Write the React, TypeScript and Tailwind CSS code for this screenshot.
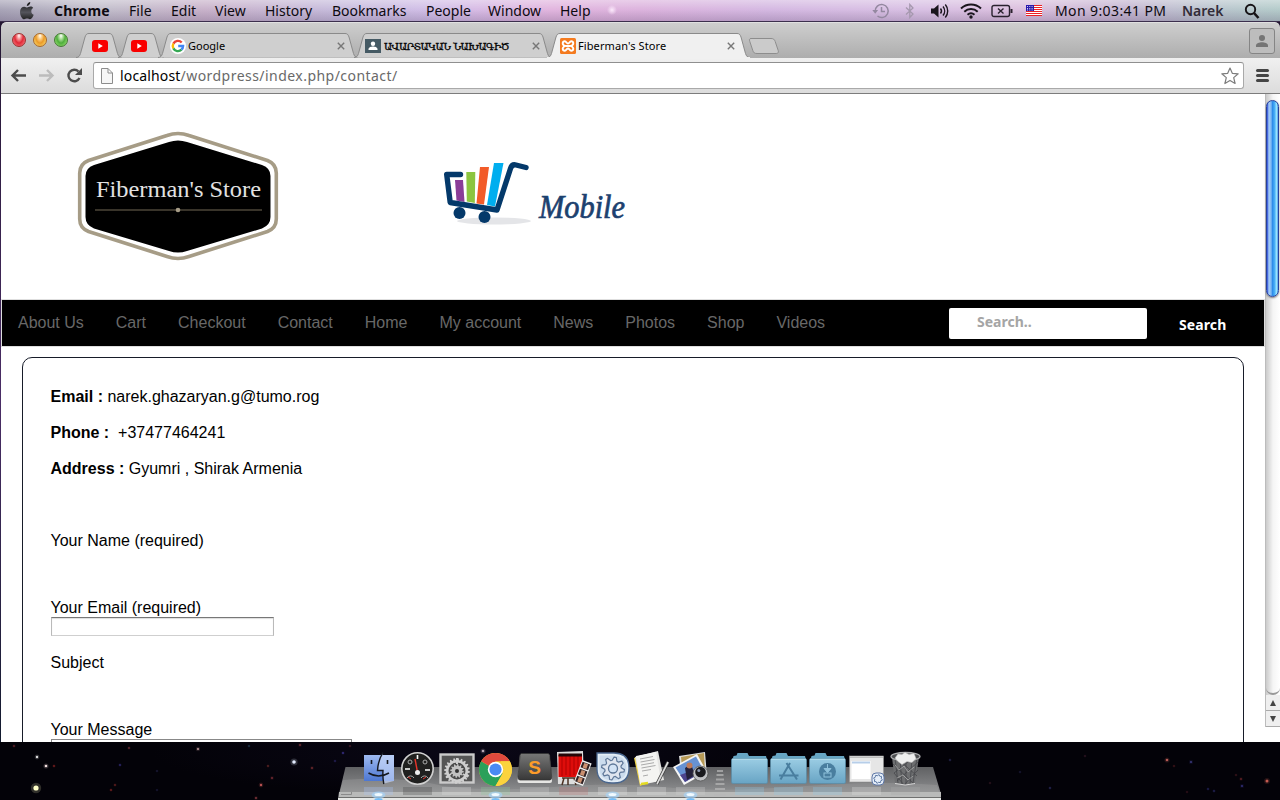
import React from "react";

const UI = "font-['Noto_Sans','Open_Sans',sans-serif]";

function AppleLogo() {
  return (
    <svg width="18" height="20" viewBox="0 0 18 20" className="block">
      <defs>
        <linearGradient id="apple" x1="0" y1="0" x2="0" y2="1">
          <stop offset="0" stopColor="#111" />
          <stop offset="0.6" stopColor="#55555c" />
          <stop offset="1" stopColor="#222" />
        </linearGradient>
      </defs>
      <path
        fill="url(#apple)"
        d="M12.3 1c.1 2-1.600 4-3.500 4C8.600 3.200 10.300 1.300 12.300 1zM15.200 7C14 7.700 13.300 8.700 13.300 10.200c0 1.700 1 2.900 2.400 3.500-.6 2-2.200 4.500-3.700 4.500-1.100 0-1.600-.7-2.900-.7s-1.900.7-2.900.7C4.300 18.200 2 14.500 2 10.900 2 7.600 4.100 5.700 6.300 5.700c1.200 0 2.100.8 2.900.8.700 0 1.800-.9 3.300-.9 1.100 0 2.100.5 2.700 1.400z"
      />
    </svg>
  );
}

function TimeMachine() {
  return (
    <svg width="18" height="16" viewBox="0 0 18 16" fill="none" stroke="#9488a0" strokeWidth="1.500">
      <path d="M3.200 8.500A6.500 6.500 0 1 1 5.500 13M9.500 4v4.500h3.500" />
      <path d="M.3 7h5.800L3.200 10.800z" fill="#9488a0" stroke="none" />
    </svg>
  );
}

function Bluetooth() {
  return (
    <svg width="10" height="16" viewBox="0 0 10 16" fill="none" stroke="#a598ae" strokeWidth="1.300">
      <path d="M1 4.500l7 6.500-3.200 3.500V1.500L8 5l-7 6.500" />
    </svg>
  );
}

function Volume() {
  return (
    <svg width="18" height="16" viewBox="0 0 18 16" fill="none" stroke="#1a151d" strokeWidth="1.400">
      <path d="M0 5.500h3L7.500 1.500v13L3 10.500H0z" fill="#1a151d" stroke="none" />
      <path d="M9.500 5.500a4 4 0 0 1 0 5M12 3.500a7 7 0 0 1 0 9M14.300 1.500a10 10 0 0 1 0 13" />
    </svg>
  );
}

function Wifi() {
  return (
    <svg width="22" height="16" viewBox="0 0 22 16" fill="none" stroke="#1a151d" strokeWidth="2">
      <path d="M1 5.500a14.500 14.500 0 0 1 20 0M4.300 8.700a10 10 0 0 1 13.400 0M7.500 11.700a5.500 5.500 0 0 1 7 0" />
      <circle cx="11" cy="14" r="1.700" fill="#1a151d" stroke="none" />
    </svg>
  );
}

function Battery() {
  return (
    <svg width="22" height="14" viewBox="0 0 22 14" fill="none" stroke="#2a222e" strokeWidth="1.400">
      <rect x="1" y="1.500" width="17.500" height="11" rx="2" />
      <path d="M20.500 5v4" strokeWidth="2" />
      <path d="M7 4.500l5.500 5M12.500 4.500L7 9.500" />
    </svg>
  );
}

function Flag() {
  return (
    <svg width="16" height="11" viewBox="0 0 16 11">
      <rect width="16" height="11" fill="#fff" />
      <path d="M0 .5h16M0 2.500h16M0 4.500h16M0 6.500h16M0 8.500h16M0 10.500h16" stroke="#ed2024" />
      <rect width="8" height="6" fill="#2a19ad" />
      <path d="M1 1.500h6M1 3.500h6M1 5h6" stroke="#fff" strokeWidth=".8" strokeDasharray="1 1.300" />
    </svg>
  );
}

function MenuBar() {
  const items: [string, string][] = [
    ["File", "w-[42px] tracking-[0.1px]"],
    ["Edit", "w-[44px]"],
    ["View", "w-[50px]"],
    ["History", "w-[67px]"],
    ["Bookmarks", "w-[94px]"],
    ["People", "w-[62px]"],
    ["Window", "w-[72px]"],
    ["Help", "w-[40px]"],
  ];
  return (
    <header
      className={`${UI} flex h-[22px] w-full shrink-0 items-center border-b border-[#3c2f4d] bg-[radial-gradient(circle_at_612px_10px,rgba(255,240,255,0.9)_0,rgba(255,240,255,0)_5px),linear-gradient(to_bottom,rgba(255,255,255,0.35),rgba(255,255,255,0)_45%,rgba(70,50,90,0.22)),linear-gradient(to_right,#a9a5b8_0%,#c3bfcc_8%,#c9b3cb_16%,#c7bcdc_26%,#d2bfe8_34%,#e2b6df_43%,#ddb4de_50%,#d5b9e2_60%,#d9c1e4_72%,#dcc0de_80%,#c5b7d2_88%,#bac6ce_95%,#b5cccb_100%)] text-[14px] text-[#0d0a10]`}
    >
      <div className="w-[54px] pl-[18px]">
        <AppleLogo />
      </div>
      <span className="w-[75px] whitespace-nowrap font-bold tracking-[0.150px]">Chrome</span>
      {items.map(([label, cls]) => (
        <span key={label} className={`${cls} whitespace-nowrap`}>
          {label}
        </span>
      ))}
      <div className="ml-auto flex items-center">
        <div className="w-[33px]"><TimeMachine /></div>
        <div className="w-[26px]"><Bluetooth /></div>
        <div className="w-[29px]"><Volume /></div>
        <div className="w-[31px]"><Wifi /></div>
        <div className="w-[35px]"><Battery /></div>
        <div className="w-[29px]"><Flag /></div>
        <span className="w-[127px] whitespace-nowrap tracking-[0.400px]">Mon 9:03:41 PM</span>
        <span className="w-[62px] whitespace-nowrap font-semibold text-[#332c38]">Narek</span>
        <svg width="36" height="16" viewBox="0 0 36 16" fill="none" stroke="#161316">
          <circle cx="6.500" cy="6.500" r="4.700" strokeWidth="1.900" />
          <path d="M10 10l4.500 5" strokeWidth="2.600" />
        </svg>
      </div>
    </header>
  );
}

function TabShape({ w, active }: { w: number; active?: boolean }) {
  const d = `M0 24.500C3 24.500 3.500 23 4.500 20.500L9 4C10 1.200 11 .5 13 .5H${w - 13}C${w - 11} .5 ${w - 10} 1.200 ${w - 9} 4L${w - 4.5} 20.500C${w - 3.5} 23 ${w - 3} 24.500 ${w} 24.500`;
  return (
    <svg width={w} height="26" className="absolute left-0 top-0">
      <path d={d} fill={active ? "#f0f0f0" : "#cfcfcf"} stroke="#8a8a8a" />
      {active && <rect y="24" width={w} height="2" fill="#f0f0f0" />}
    </svg>
  );
}

function Close() {
  return (
    <svg width="8" height="8" viewBox="0 0 8 8" className="shrink-0">
      <path d="M.8.8l6.400 6.400M7.200.8L.8 7.200" stroke="#777" strokeWidth="1.400" />
    </svg>
  );
}

function YouTube() {
  return (
    <svg width="16" height="12" viewBox="0 0 16 12">
      <rect width="16" height="12" rx="3" fill="#f90000" />
      <path d="M6.300 3.300v5.400L10.800 6z" fill="#fff" />
    </svg>
  );
}

function GoogleIcon() {
  return (
    <svg width="16" height="16" viewBox="0 0 16 16" className="shrink-0">
      <circle cx="8" cy="8" r="8" fill="#fff" />
      <g fill="none" strokeWidth="2.400">
        <path d="M3.400 5.600A5.100 5.100 0 0 1 11.700 4.500" stroke="#ea4335" />
        <path d="M3.400 10.400a5.100 5.100 0 0 1 0-4.800" stroke="#fbbc05" />
        <path d="M11.500 11.700a5.100 5.100 0 0 1-8.100-1.300" stroke="#34a853" />
        <path d="M8.200 8h4.900a5 5 0 0 1-1.700 3.700" stroke="#4285f4" />
      </g>
    </svg>
  );
}

function ClassroomIcon() {
  return (
    <svg width="16" height="14" viewBox="0 0 16 14" className="shrink-0">
      <rect width="16" height="14" fill="#455a64" />
      <circle cx="8" cy="4.700" r="2.200" fill="#fff" />
      <path d="M3.500 11V10c0-1.700 3-2.500 4.500-2.500s4.500.8 4.500 2.500v1z" fill="#fff" />
    </svg>
  );
}

function XamppIcon() {
  return (
    <svg width="16" height="16" viewBox="0 0 16 16" className="shrink-0">
      <rect width="16" height="16" rx="1.500" fill="#f47b20" />
      <path
        d="M5 8C1.500 6.500 2.500 3.300 4.800 3.300 6.500 3.300 6.500 5.500 8 5.500s1.500-2.200 3.200-2.200C13.500 3.300 14.500 6.500 11 8c3.500 1.500 2.500 4.700.2 4.700-1.700 0-1.700-2.200-3.200-2.200s-1.500 2.200-3.200 2.200C2.500 12.700 1.500 9.500 5 8zM5.500 8h5"
        fill="none"
        stroke="#fff"
        strokeWidth="1.900"
      />
    </svg>
  );
}

function TabStrip() {
  return (
    <div className={`${UI} flex h-[36px] shrink-0 items-start rounded-t-[5px] border-t border-[#e0e0e0] bg-gradient-to-b from-[#cecece] to-[#adadad] text-[11px] text-black`}>
      <div className="flex w-[75px] gap-[7px] pl-[11px] pt-[10px]">
        <i className="h-[14px] w-[14px] rounded-full border border-[#9c3030] bg-[radial-gradient(ellipse_at_50%_15%,#fff_0%,#f79a9a_22%,#e02a38_50%,#ff8c90_100%)]" />
        <i className="h-[14px] w-[14px] rounded-full border border-[#a8692a] bg-[radial-gradient(ellipse_at_50%_15%,#fff_0%,#fcd08a_22%,#eb9a28_50%,#ffee80_100%)]" />
        <i className="h-[14px] w-[14px] rounded-full border border-[#447a34] bg-[radial-gradient(ellipse_at_50%_15%,#fff_0%,#b2e0a0_22%,#4fae3c_50%,#aaf080_100%)]" />
      </div>
      <div className="relative mt-[10px] h-[26px] w-[46px]">
        <TabShape w={46} />
        <div className="relative pl-[16px] pt-[7px]"><YouTube /></div>
      </div>
      <div className="relative -ml-[4px] mt-[10px] h-[26px] w-[46px]">
        <TabShape w={46} />
        <div className="relative pl-[13px] pt-[7px]"><YouTube /></div>
      </div>
      <div className="relative -ml-[6px] mt-[10px] h-[26px] w-[200px]">
        <TabShape w={200} />
        <div className="relative flex h-[26px] items-center pl-[12px] pr-[13px]">
          <GoogleIcon />
          <span className="ml-[2px] flex-1">Google</span>
          <Close />
        </div>
      </div>
      <div className="relative -ml-[4px] mt-[10px] h-[26px] w-[198px]">
        <TabShape w={198} />
        <div className="relative flex h-[26px] items-center pl-[11px] pr-[12px]">
          <ClassroomIcon />
          <span className="ml-[3px] flex-1 whitespace-nowrap font-['DejaVu_Serif',serif] text-[10px] tracking-[-0.550px] [-webkit-text-stroke:0.300px_#000]">ԱՎԱՐՏԱԿԱՆ ՆԱԽԱԳԻԾ</span>
          <Close />
        </div>
      </div>
      <div className="relative z-10 -ml-[5px] mt-[10px] h-[26px] w-[203px]">
        <TabShape w={203} active />
        <div className="relative flex h-[26px] items-center pl-[13px] pr-[15px]">
          <XamppIcon />
          <span className="ml-[2px] flex-1 whitespace-nowrap tracking-[0.100px]">Fiberman's Store</span>
          <Close />
        </div>
      </div>
      <svg width="34" height="18" viewBox="0 0 34 18" className="-ml-[3px] mt-[14px]">
        <path d="M4 1.500h20c2.500 0 3.500 1 4.200 3l3 9c.6 2-.2 3-2 3H10c-2.500 0-3.500-.8-4.200-3l-3-9c-.6-2-.5-3 1.200-3z" fill="#cbcbcb" stroke="#8d8d8d" />
      </svg>
      <div className="ml-auto mr-[5px] mt-[5px] flex h-[26px] w-[26px] items-center justify-center rounded-[3px] border border-[#858585] bg-[#bdbdbd]">
        <svg width="14" height="14" viewBox="0 0 14 14" fill="#757575">
          <circle cx="7" cy="4" r="3" />
          <path d="M1 13v-1.500C1 9.500 4.500 8.300 7 8.300s6 1.200 6 3.200V13z" />
        </svg>
      </div>
    </div>
  );
}

function Toolbar() {
  return (
    <div className="flex h-[36px] shrink-0 items-center border-b border-[#7c7c7c] bg-gradient-to-b from-[#f0f0f0] to-[#dcdcdc]">
      <svg width="80" height="20" viewBox="0 0 80 20" className="ml-[9px] shrink-0" fill="none" strokeWidth="2.400">
        <path d="M16 9.500H3M8 4L2.500 9.500 8 15" stroke="#4c4c4c" />
        <path d="M29 9.500h13M37 4l5.500 5.500L37 15" stroke="#bcbcbc" />
        <path d="M68.500 5.500A5.800 5.800 0 1 0 69.500 12" stroke="#4c4c4c" />
        <path d="M72 2v7h-7z" fill="#4c4c4c" stroke="none" />
      </svg>
      <div className="ml-[3px] flex h-[27px] flex-1 items-center rounded-[3px] border border-[#a9a9a9] border-t-[#8f8f8f] bg-white pl-[7px] pr-[4px]">
        <svg width="12" height="16" viewBox="0 0 12 16" fill="#f6f6f6" stroke="#8c8c8c">
          <path d="M.5.5h6.500l4.500 4.500v10.500H.5zM7 .5v4.500h4.500" />
        </svg>
        <span className={`${UI} ml-[7px] flex-1 whitespace-nowrap text-[14px] tracking-[0.460px] text-[#696969]`}>
          <span className="tracking-[0.150px] text-black">localhost</span>/wordpress/index.php/contact/
        </span>
        <svg width="18" height="18" viewBox="0 0 18 18" fill="#fff" stroke="#7d7d7d" strokeWidth="1.200" strokeLinejoin="round">
          <path d="M9 1l2.300 5.300 5.900.5-4.500 3.800 1.400 5.900L9 13.400l-5.100 3.100 1.400-5.900L.8 6.800l5.900-.5z" />
        </svg>
      </div>
      <div className="ml-[12px] mr-[11px] flex w-[13px] flex-col gap-[2px]">
        <i className="h-[3px] rounded-full bg-[#454545]" />
        <i className="h-[3px] rounded-full bg-[#454545]" />
        <i className="h-[3px] rounded-full bg-[#454545]" />
      </div>
    </div>
  );
}

function StoreLogo() {
  return (
    <svg width="204" height="132" viewBox="0 0 204 132" strokeLinejoin="round">
      <path d="M12.500 29.500Q3.700 33 3.700 42v46Q3.700 97 12.500 100.500L91 125.500q11 4 22 0l78.500-25q8.800-3.500 8.800-12.500V42q0-9-8.800-12.500L113 4.500q-11-4-22 0z" fill="#fff" stroke="#a69c86" strokeWidth="3.600" />
      <path d="M18 34Q9.500 37 9.500 45v41Q9.500 94 18 97.500l75 22.500q9 3 18 0l75-22.500q8.500-3.500 8.500-11.500V45q0-8-8.500-11L111 11q-9-3-18 0z" fill="#000" />
      <text x="20" y="66" textLength="165" lengthAdjust="spacingAndGlyphs" fontFamily="'Liberation Serif', serif" fontSize="24" fill="#e2e2e2">Fiberman's Store</text>
      <path d="M19 79h167" stroke="#4d4638" strokeWidth="1.500" />
      <circle cx="102" cy="79" r="2.300" fill="#a69c86" />
    </svg>
  );
}

function MobileLogo() {
  return (
    <svg width="190" height="66" viewBox="0 0 190 66">
      <ellipse cx="53" cy="61" rx="37" ry="3.500" fill="#e4e5e8" />
      <path d="M14 20h8l1.500 22-8-1.500z" fill="#8a3d98" />
      <path d="M25.300 12h9l-.5 31-8-1.500z" fill="#8cc540" />
      <path d="M39 7h9l-5 37.500-7.500-1z" fill="#f25b29" />
      <path d="M53 3h9.500L54 46.500l-8-1.500z" fill="#00aeef" />
      <path
        d="M19.500 14.500H5.700L9.200 42.500 56 50 69.500 8.500q1.500-4.500 5.500-3.500l10 2.500"
        fill="none"
        stroke="#04396a"
        strokeWidth="5.400"
        strokeLinecap="round"
        strokeLinejoin="round"
      />
      <circle cx="18.500" cy="53" r="6" fill="#04396a" />
      <circle cx="43.500" cy="57" r="6" fill="#04396a" />
      <text x="98" y="58" textLength="86" lengthAdjust="spacingAndGlyphs" fontFamily="'Liberation Serif', serif" fontStyle="italic" fontSize="33" fill="#1c416f" stroke="#1c416f" strokeWidth=".7">Mobile</text>
    </svg>
  );
}

function SiteNav() {
  const links = ["About Us", "Cart", "Checkout", "Contact", "Home", "My account", "News", "Photos", "Shop", "Videos"];
  return (
    <nav className="mr-[1px] flex h-[46px] items-start bg-black shadow-[0_0_0_1px_#dedede]">
      <div className="flex gap-8 pl-4 pt-[11px] text-[16px] leading-6 text-[#686868]">
        {links.map((l) => (
          <a key={l} className="whitespace-nowrap">{l}</a>
        ))}
      </div>
      <div className={`${UI} ml-auto flex text-[14px] font-bold`}>
        <div className="mt-[8px] h-[31px] w-[198px] rounded-[2px] bg-white pl-[28px] leading-[28px] text-[#a5a5a5]">Search..</div>
        <button className="ml-[32px] mr-[37px] mt-[11px] w-[48px] whitespace-nowrap text-left leading-[28px] tracking-[0.100px] text-white">Search</button>
      </div>
    </nav>
  );
}

function ContactCard() {
  return (
    <main className="ml-[20px] mr-[21px] mt-[11px] h-[500px] rounded-[10px] border border-[#171c29] pl-[27.500px] pt-[27px] text-[16px] leading-6 text-black">
      <p className="mb-3"><b>Email :</b> narek.ghazaryan.g@tumo.rog</p>
      <p className="mb-3"><b>Phone :</b>&nbsp; +37477464241</p>
      <p className="mb-12"><b>Address :</b> Gyumri , Shirak Armenia</p>
      <p className="mb-[43px]">Your Name (required)</p>
      <p className="h-[21px]">Your Email (required)</p>
      <div className="ml-[0.500px] h-[19px] w-[223px] border border-[#bababa] border-b-[#cfcfcf] border-t-[#777] shadow-[inset_0_1px_1px_#ddd]" />
      <p className="mb-[43px] mt-[15px]">Subject</p>
      <p className="h-[21px]">Your Message</p>
      <div className="ml-[0.500px] h-[80px] w-[301px] border border-[#888]" />
    </main>
  );
}

function ScrollBar() {
  return (
    <aside className="flex h-[633px] w-[15px] shrink-0 flex-col border-l border-[#bcbcbc] bg-gradient-to-r from-[#cbcbcb] via-[#f5f5f5] to-[#fff]">
      <div className="mt-[6px] h-[197px] w-[13px] rounded-full border border-[#26409c] bg-[linear-gradient(to_right,#2346d8_0%,#a9cff8_18%,#79b6f3_38%,#2e8ce9_50%,#46adf7_68%,#a8edff_90%,#338ae0_100%)] shadow-[0_1px_2px_#777]" />
      <div className="mt-auto h-[16px] rounded-b-full border-b-2 border-[#999]" />
      <div className="flex h-[16px] items-center justify-center border-b border-[#aaa] bg-[#efefef]">
        <svg width="8" height="8"><path d="M1 7h6L4 1z" fill="#454545" /></svg>
      </div>
      <div className="flex h-[16px] items-center justify-center border-b border-[#aaa] bg-[#efefef]">
        <svg width="8" height="8"><path d="M1 1h6L4 7z" fill="#454545" /></svg>
      </div>
    </aside>
  );
}

const stars: [number, number, number, string][] = [
  [36, 46, 2.6, "#ffffc8"], [37, 15, 1.2, "#ddd"], [46, 24, 1.3, "#f2dede"], [54, 24, 0.9, "#7d2020"],
  [14, 4, 0.9, "#67252b"], [129, 6, 0.9, "#692a30"], [198, 7, 1.1, "#c09a9a"], [120, 23, 0.9, "#302b72"],
  [115, 43, 0.9, "#642020"], [111, 48, 0.9, "#782222"], [157, 29, 0.8, "#222248"], [157, 48, 0.8, "#202044"],
  [294, 20, 1.8, "#e4ecff"], [249, 4, 0.8, "#23455e"], [300, 3, 1, "#6c2e32"], [312, 26, 1, "#702a2e"],
  [261, 43, 1.2, "#b65050"], [272, 36, 1, "#742a32"], [268, 24, 0.9, "#602424"], [256, 56, 1, "#80353a"],
  [343, 11, 0.9, "#3b328c"], [335, 19, 0.8, "#302b72"], [483, 9, 1.3, "#b9a8b5"], [350, 4, 0.8, "#5a2530"],
  [1167, 18, 1.3, "#b55a54"], [1191, 20, 1.1, "#383678"], [1174, 24, 0.8, "#561c20"], [1236, 33, 0.8, "#4c1c22"],
  [1241, 37, 1, "#602024"], [1242, 44, 1.1, "#302e75"], [1267, 39, 1.5, "#c45a50"], [1208, 47, 0.9, "#202054"],
  [1214, 49, 0.9, "#252558"], [1187, 50, 0.8, "#401820"], [950, 18, 0.9, "#26264e"], [1020, 30, 0.8, "#222246"],
  [1085, 14, 0.8, "#3c1c2c"], [1050, 46, 0.9, "#292958"], [990, 41, 0.8, "#3b1c28"],
];

function Icon({ children, lit, glow }: { children: React.ReactNode; lit?: boolean; glow?: string }) {
  return (
    <svg width="39" height="58" viewBox="0 0 39 58" className="shrink-0">
      {glow && <rect x="5" y="45" width="29" height="8" fill={glow} opacity=".3" />}
      {children}
      {lit && (
        <g>
          <ellipse cx="19.500" cy="53" rx="7" ry="3.500" fill="#a5d4fa" opacity=".65" />
          <ellipse cx="19.500" cy="52.500" rx="4" ry="1.500" fill="#f1faff" />
          <ellipse cx="19.500" cy="57.500" rx="4" ry="1.500" fill="#75bdf7" />
        </g>
      )}
    </svg>
  );
}

function Folder({ children }: { children?: React.ReactNode }) {
  return (
    <Icon glow="#8dc8e4">
      <path d="M2.500 18l1-4 3-.5 1-2.500h10l1.500 3h17l1 4z" fill="#67a5c3" />
      <rect x="1.500" y="16.500" width="36" height="25" rx="1.500" fill="url(#folder)" stroke="#598ca8" strokeWidth=".7" />
      <path d="M2 17.300h35" stroke="#b5ddeb" />
      {children}
    </Icon>
  );
}

function gear(cx: number, cy: number, r: number, teeth: number, depth: number) {
  const pts: string[] = [];
  for (let i = 0; i < teeth * 4; i++) {
    const a = ((i + 0.5) / (teeth * 4)) * Math.PI * 2;
    const rr = i % 4 < 2 ? r : r - depth;
    pts.push(`${(cx + rr * Math.cos(a)).toFixed(2)},${(cy + rr * Math.sin(a)).toFixed(2)}`);
  }
  return pts.join(" ");
}

function Dock() {
  return (
    <footer className="relative flex h-[58px] shrink-0 bg-[#030208]">
      <svg width="1280" height="58" viewBox="0 0 1280 58" className="absolute left-0 top-0">
        <defs>
          <linearGradient id="shelf" x1="0" y1="0" x2="0" y2="1">
            <stop offset="0" stopColor="#606163" />
            <stop offset=".6" stopColor="#7c7d7f" />
            <stop offset="1" stopColor="#929394" />
          </linearGradient>
          <linearGradient id="finder" x1="0" y1="0" x2="0" y2="1">
            <stop offset="0" stopColor="#9db9f0" />
            <stop offset="1" stopColor="#4d77d2" />
          </linearGradient>
          <linearGradient id="folder" x1="0" y1="0" x2="0" y2="1">
            <stop offset="0" stopColor="#9bcde4" />
            <stop offset="1" stopColor="#68a4c4" />
          </linearGradient>
          <linearGradient id="sublime" x1="0" y1="0" x2="0" y2="1">
            <stop offset="0" stopColor="#777" />
            <stop offset="1" stopColor="#383838" />
          </linearGradient>
          <radialGradient id="night">
            <stop offset="0" stopColor="#0a0716" />
            <stop offset="1" stopColor="#0a0716" stopOpacity="0" />
          </radialGradient>
        </defs>
        <ellipse cx="480" cy="10" rx="330" ry="45" fill="url(#night)" />
        {stars.map(([x, y, r, c], i) => (
          <g key={i}>
            <circle cx={x} cy={y} r={r * 2} fill={c} opacity=".18" />
            <circle cx={x} cy={y} r={r} fill={c} />
          </g>
        ))}
        <path d="M345.500 25H933l8 27H339z" fill="url(#shelf)" />
        <path d="M343 38q60-4 100 6 50 6 110 1t110 0 110 1 90-5 74 2l2 7H340z" fill="#aaa" opacity=".3" />
        <path d="M339 50h602v8H338z" fill="#b9bab9" />
        <path d="M338 55.500h603" stroke="#6f706f" />
        <path d="M338 57h603" stroke="#e7e8e6" strokeWidth="2" />
        <path d="M341 52.500h10.500V50" stroke="#8a8a8a" fill="none" />
      </svg>

      <div className="relative flex pl-[359px]">
        <Icon lit glow="#a9c4f6">
          <rect x="5" y="13" width="30" height="26" fill="url(#finder)" />
          <path d="M24 10.500q-5 8-5 18h5q-.5 7 1 13L35 39V13H24z" fill="#c9d9fa" opacity=".65" />
          <path d="M24 10.500q-5 8-5.500 18H24q-.5 7 .8 13.500" fill="none" stroke="#15181f" strokeWidth="1.400" />
          <path d="M12.500 18v4M28.500 18v4M9.500 31q10 6 20.500 0" fill="none" stroke="#15181f" strokeWidth="1.600" />
        </Icon>
        <Icon glow="#444">
          <circle cx="19.500" cy="26.500" r="15.700" fill="#20201f" stroke="#d1d1d1" strokeWidth="1.600" />
          <g fill="none" stroke="#aaa" strokeWidth="1">
            <circle cx="12" cy="20" r="2" /><circle cx="27" cy="20" r="2" />
            <path d="M19.500 13v4M7 27h5M27 28h5" stroke="#fff" strokeWidth="1.600" />
            <path d="M9 36a4 4 0 0 1 7 0M23 36a4 4 0 0 1 7 0" />
          </g>
          <path d="M17 17l2.500 13" stroke="#e8342b" strokeWidth="1.400" />
          <circle cx="19.500" cy="30.500" r="2.500" fill="#eee" />
          <path d="M10 35l3 2M28 35l-3 2" stroke="#e8342b" />
        </Icon>
        <Icon glow="#ddd">
          <rect x="3.500" y="12.500" width="33" height="28" fill="#555" stroke="#cacaca" strokeWidth="2.400" />
          <polygon points={gear(20, 29, 13, 20, 2)} fill="#cfcfcf" />
          <circle cx="20" cy="29" r="8.500" fill="#4b4b4b" />
          <polygon points={gear(20, 29, 7, 12, 1.700)} fill="#c2c2c2" />
          <circle cx="20" cy="29" r="2" fill="#333" />
          <path d="M20 22v-6M26 32l5 3M14 32l-5 3" stroke="#cfcfcf" strokeWidth="2" />
        </Icon>
        <Icon lit glow="#8ec69a">
          <circle cx="19.500" cy="27.500" r="16.500" fill="#f9cd35" />
          <path d="M19.500 27.500L5.200 19.300A16.500 16.500 0 0 0 19.500 44l7.200-12.400z" fill="#2aa05a" />
          <path d="M19.500 27.500L5.200 19.300A16.500 16.500 0 0 1 33.800 19.300H19.500z" fill="#e04a3d" />
          <path d="M33.800 19.300a16.500 16.500 0 0 1-14.300 24.700l7.200-12.400q2-4 0-8.200l-2-4.100z" fill="#fbd33d" />
          <circle cx="19.500" cy="27.500" r="7.700" fill="#fff" />
          <circle cx="19.500" cy="27.500" r="6.100" fill="#4a8af4" />
        </Icon>
        <Icon glow="#ccc">
          <path d="M5 13l-2.500 26q0 2 2 2h30.500q2 0 2-2L34.500 13z" fill="#e5e5e3" />
          <path d="M6.500 11.500h26.500q1.500 0 1.700 2l2 21.500q0 3-2 3H5q-2 0-2-3l2-21.500q.2-2 1.500-2z" fill="url(#sublime)" stroke="#303030" strokeWidth=".7" />
          <text x="19.500" y="32" textAnchor="middle" fontFamily="'Liberation Sans', sans-serif" fontWeight="bold" fontSize="19" fill="#fd9c29">S</text>
        </Icon>
        <Icon glow="#bd7474">
          <path d="M3 10l26-1 1 33H4z" fill="#ddd" />
          <path d="M4.500 13h23.500v22H4.500z" fill="#de0d0b" />
          <path d="M8 14v20M12 14v19M16 14v20M20 14v19M24 14v20" stroke="#a80000" strokeWidth=".9" />
          <path d="M4.500 11.500H28v3H4.500z" fill="#240608" />
          <path d="M8 36h17M10 36l-2 7M14 36v7M20 36l2 7" stroke="#4b3022" strokeWidth="1.500" />
          <g transform="rotate(21 29 30)">
            <rect x="24" y="19" width="10" height="24" fill="#eee" />
            <path d="M25 20.500h8v6h-8zM25 28h8v6h-8zM25 35.500h8v6h-8z" fill="#302224" />
            <path d="M29 21v5M29 28.500v5M29 36v5" stroke="#cb9070" strokeWidth="4" />
          </g>
        </Icon>
        <Icon lit glow="#ddd">
          <path d="M4 11h17q15 0 15 15 0 15-15 15h-2Q4 41 4 27z" fill="#e3edf6" stroke="#49668e" strokeWidth="1.300" />
          <path d="M6.500 13.500h14q13 0 13 13 0 12-13 12-14 0-14-12z" fill="#ccdced" />
          <polygon points={gear(20, 26.500, 11.500, 8, 3.200)} fill="#dfe5ef" stroke="#5e7798" strokeWidth="1.200" strokeLinejoin="round" />
          <circle cx="20" cy="26.500" r="4.500" fill="#d3e3f5" stroke="#5e7798" strokeWidth="1.300" />
        </Icon>
        <Icon glow="#ddd">
          <path d="M2 16l8-3 4 28-6 3z" fill="#efd449" />
          <path d="M3 15L26 9l6 29-23 5z" fill="#e4e4e2" />
          <path d="M4 14L24 10l5 29-21 3z" fill="#f4f4f2" />
          <path d="M8 17l13-2.500M8.500 20l14-2.500M9 23l13-2.300M9.500 26l14-2.500M10 29l9-1.500M11 34l5-1" stroke="#aaa" />
          <path d="M36 20L25 42" stroke="#3a3a3a" strokeWidth="3.200" />
          <path d="M36 20L25 42" stroke="#ddd" strokeWidth="1.700" />
          <path d="M9 42l7-1" stroke="#e4db22" strokeWidth="2.500" />
        </Icon>
        <Icon lit glow="#ccc">
          <path d="M8 14l26-4 2 24-25 5z" fill="#ddd" />
          <path d="M10 15l23-4 1 20-22 4z" fill="#b79a57" />
          <path d="M2 25L26 12l10 18-23 13z" fill="#f5f5f5" />
          <path d="M4.500 25.500L25 14.500l8 14.500-19 11z" fill="#6792d3" />
          <path d="M9 33l22-8 2 4-19 11z" fill="#4c438c" />
          <path d="M14 26l6-4 4 11-8 5z" fill="#24213a" />
          <circle cx="18.500" cy="23.500" r="3" fill="#be7b59" />
          <circle cx="29.500" cy="31.500" r="7.500" fill="#bfc1c4" stroke="#555" strokeWidth=".8" />
          <circle cx="29.500" cy="30" r="5.300" fill="#1a1a1e" />
          <circle cx="27.800" cy="28.500" r="1.500" fill="#8c97af" />
        </Icon>
        <svg width="20" height="58" viewBox="0 0 20 58">
          <path d="M7 29h6M6.500 33h7M6 37.500h8M5.500 42h9M5 47h10M4 53h12" stroke="#b8b8b8" strokeWidth="2" opacity=".7" />
        </svg>
        <Folder />
        <Folder>
          <g fill="none" stroke="#497e9f" strokeWidth="2">
            <path d="M21 21l-9.500 16.500M17.500 21L28 37.500M10 33.500h19.500" />
          </g>
        </Folder>
        <Folder>
          <circle cx="19.500" cy="29.500" r="8.500" fill="#497e9f" />
          <path d="M19.500 22v5M16 26.500h7l-3.500 4z" fill="#8fc2dc" stroke="#8fc2dc" />
          <rect x="16" y="31" width="7" height="4" fill="none" stroke="#8fc2dc" />
        </Folder>
        <Icon glow="#ddd">
          <rect x="2.500" y="14" width="34" height="26" fill="#e6e6e6" stroke="#969696" strokeWidth=".6" />
          <path d="M3 15.500h33" stroke="#bdbdbd" />
          <rect x="4.500" y="19" width="19" height="18" fill="#fff" />
          <path d="M5 20.500h18" stroke="#b7cee9" strokeWidth="2" />
          <rect x="25" y="31" width="12" height="12" rx="4" fill="#e7eff9" stroke="#5e77a6" />
          <polygon points={gear(31, 37, 4.300, 8, 1)} fill="none" stroke="#5d79a5" />
        </Icon>
        <Icon glow="#aaa">
          <path d="M6 15l3 26q10 4 20 0l4-26z" fill="#6e6f71" />
          <path d="M9 16l3 25M14 17l2 26M20 17v26M26 17l-2 25M31 16l-4 25M7 22l21 20M8 31l10 12M12 17l19 17M32 20L11 39M26 17L8 31M32 28L18 43" stroke="#46484b" strokeWidth=".8" />
          <path d="M9 23l4 5 5-4 4 6 6-5M11 36l6-3 5 5 5-4" stroke="#c4c4c4" fill="none" opacity=".6" />
          <ellipse cx="19.500" cy="14.500" rx="14.500" ry="4" fill="#4d4e51" stroke="#adadaf" strokeWidth="1.300" />
          <path d="M9 16l3-4 4 .5 3-2 4 2 5-1 2 5-4 4-5-1-5 3-4-3z" fill="#efefef" stroke="#c0c0c0" strokeWidth=".5" />
          <path d="M9 41.500q10.500 3 20 0" stroke="#d5d5d5" fill="none" />
        </Icon>
      </div>
    </footer>
  );
}

export default function App() {
  return (
    <div className="flex h-[800px] w-[1280px] flex-col overflow-hidden bg-gradient-to-b from-[#20142e] via-[#4a2d66] to-[#071625] font-['Liberation_Sans',Arial,sans-serif]">
      <MenuBar />
      <div className="ml-[1px] flex h-[720px] shrink-0 flex-col overflow-hidden rounded-t-[5px]">
        <TabStrip />
        <Toolbar />
        <div className="flex h-[648px] overflow-hidden bg-white pl-[1px]">
          <div className="w-[1263px] shrink-0">
            <div className="flex h-[206px] items-start">
              <div className="pl-[74px] pt-[37px]"><StoreLogo /></div>
              <div className="pl-[161px] pt-[66px]"><MobileLogo /></div>
            </div>
            <SiteNav />
            <ContactCard />
          </div>
          <ScrollBar />
        </div>
      </div>
      <Dock />
    </div>
  );
}
